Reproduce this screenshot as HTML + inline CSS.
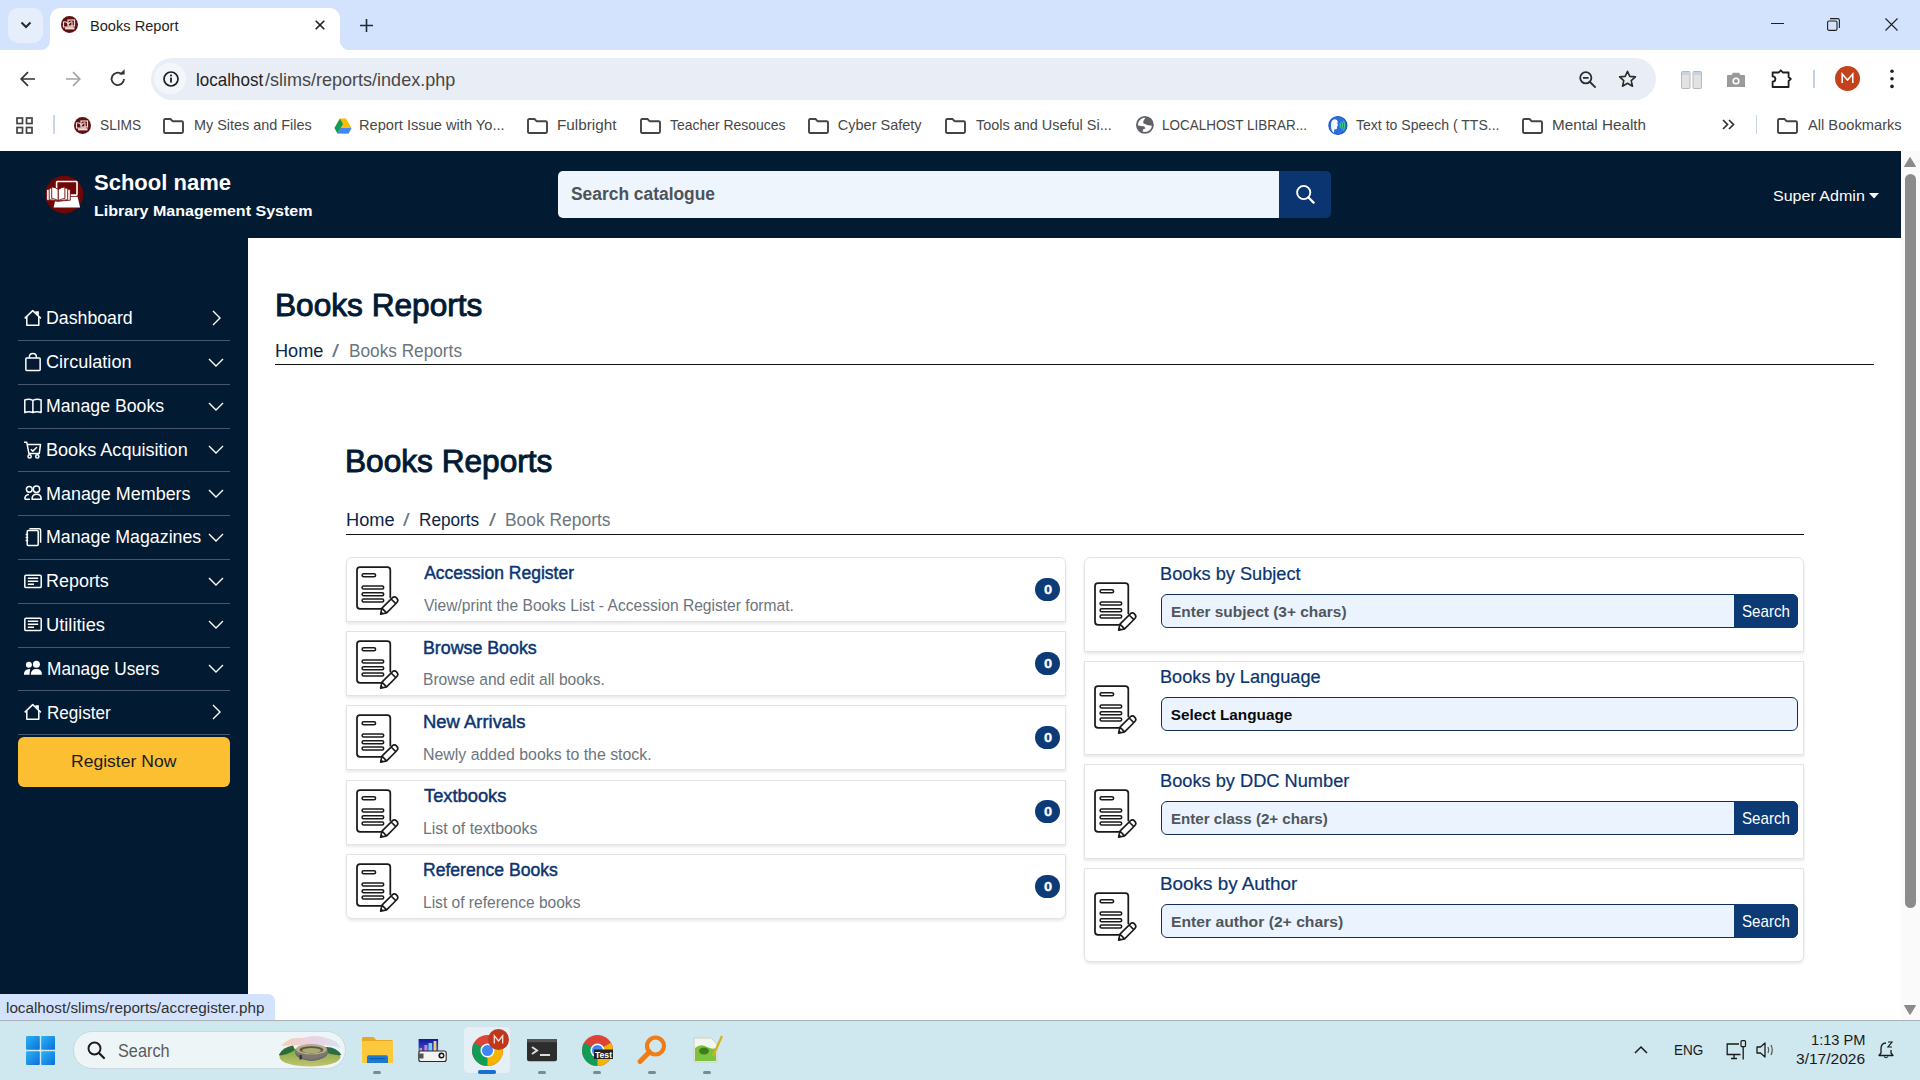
<!DOCTYPE html>
<html><head><meta charset="utf-8"><title>Books Report</title>
<style>
*{box-sizing:border-box}
html,body{margin:0;padding:0}
body{width:1920px;height:1080px;position:relative;overflow:hidden;font-family:"Liberation Sans",sans-serif;background:#fff}
.a{position:absolute}
.t{position:absolute;white-space:pre;line-height:1;transform-origin:0 0}
svg{position:absolute;overflow:visible}
.dv{position:absolute;left:18px;width:212px;height:1px;background:#46576c}
.lc{position:absolute;left:346px;width:720px;height:65px;background:#fff;border:1px solid #e3e3e3;box-shadow:0 2px 3px rgba(0,0,0,.09)}
.rc{position:absolute;left:1084.4px;width:719.4px;height:94.5px;background:#fff;border:1px solid #e3e3e3;box-shadow:0 2px 3px rgba(0,0,0,.09)}
.badge{position:absolute;left:1035px;width:25px;height:23px;border-radius:12px;background:#0c3b78}
.inp{position:absolute;left:1161.25px;width:636.75px;height:34px;border:1.5px solid #122f55;border-radius:6px;background:#ebf4fe}
.sb{position:absolute;left:1734.2px;width:63.8px;height:34px;background:#0b3a75;border-radius:0 6px 6px 0}
</style></head>
<body>
<!-- ================= BROWSER CHROME ================= -->
<div class="a" style="left:0;top:0;width:1920px;height:50px;background:#d3e3fd"></div>
<div class="a" style="left:0;top:50px;width:1920px;height:101px;background:#fff"></div>
<!-- tab search button -->
<div class="a" style="left:8px;top:8px;width:35px;height:35px;border-radius:10px;background:#e6eefc"></div>
<svg style="left:20px;top:21px" width="12" height="8" viewBox="0 0 12 8"><path d="M1.5 1.5 L6 6 L10.5 1.5" fill="none" stroke="#1f2a37" stroke-width="2"/></svg>
<!-- active tab -->
<div class="a" style="left:50px;top:8px;width:290px;height:42px;background:#fff;border-radius:10px 10px 0 0"></div>
<div class="a" style="left:40px;top:40px;width:10px;height:10px;background:radial-gradient(circle at 0 0,transparent 10px,#fff 10.5px)"></div>
<div class="a" style="left:340px;top:40px;width:10px;height:10px;background:radial-gradient(circle at 100% 0,transparent 10px,#fff 10.5px)"></div>
<!-- favicon -->
<svg style="left:61px;top:16px" width="17" height="17" viewBox="0 0 17 17"><circle cx="8.5" cy="8.5" r="8.5" fill="#5c1010"/><rect x="7" y="4" width="6.5" height="6" fill="none" stroke="#f3d9d9" stroke-width="1.2"/><path d="M2.5 6 Q5 5 7.5 8 Q9.5 5 11 6 V11 H2.5Z" fill="none" stroke="#f3d9d9" stroke-width="1.2"/><rect x="4" y="11.2" width="9.5" height="2.2" fill="#f3d9d9"/></svg>
<!-- tab close -->
<svg style="left:315px;top:20px" width="10" height="10" viewBox="0 0 10 10"><path d="M0.7 0.7 L9.3 9.3 M9.3 0.7 L0.7 9.3" stroke="#1f1f1f" stroke-width="1.6"/></svg>
<!-- new tab -->
<svg style="left:359.5px;top:18.5px" width="13" height="13" viewBox="0 0 13 13"><path d="M6.5 0 V13 M0 6.5 H13" stroke="#1f2a37" stroke-width="1.6"/></svg>
<!-- window controls -->
<div class="a" style="left:1771px;top:23px;width:13px;height:1.2px;background:#1f1f1f"></div>
<svg style="left:1827px;top:18px" width="13" height="13" viewBox="0 0 13 13"><rect x="0.6" y="3" width="9.4" height="9.4" rx="1.5" fill="none" stroke="#1f1f1f" stroke-width="1.1"/><path d="M3 0.6 H10.5 Q12.4 0.6 12.4 2.5 V10" fill="none" stroke="#1f1f1f" stroke-width="1.1"/></svg>
<svg style="left:1885px;top:18px" width="13" height="13" viewBox="0 0 13 13"><path d="M0.5 0.5 L12.5 12.5 M12.5 0.5 L0.5 12.5" stroke="#1f1f1f" stroke-width="1.1"/></svg>

<!-- toolbar nav -->
<svg style="left:20px;top:70.5px" width="16" height="16" viewBox="0 0 16 16"><path d="M15 8 H1.5 M8 1.2 L1.2 8 L8 14.8" fill="none" stroke="#333" stroke-width="1.7"/></svg>
<svg style="left:64.5px;top:70.5px" width="16" height="16" viewBox="0 0 16 16"><path d="M1 8 H14.5 M8 1.2 L14.8 8 L8 14.8" fill="none" stroke="#a5a5a5" stroke-width="1.7"/></svg>
<svg style="left:110px;top:70.5px" width="16" height="16" viewBox="0 0 16 16"><path d="M14 8 A6.2 6.2 0 1 1 11.8 3.1" fill="none" stroke="#333" stroke-width="1.8"/><path d="M9 3.6 H14.6 V-1.8 Z" fill="#333"/></svg>
<!-- omnibox -->
<div class="a" style="left:151px;top:58px;width:1505px;height:42px;border-radius:21px;background:#e9eef6"></div>
<div class="a" style="left:154px;top:63px;width:32px;height:31px;border-radius:16px;background:#f3f6fb"></div>
<svg style="left:163px;top:71px" width="16" height="16" viewBox="0 0 16 16"><circle cx="8" cy="8" r="7" fill="none" stroke="#1f1f1f" stroke-width="1.7"/><rect x="7.1" y="6.6" width="1.8" height="5" fill="#1f1f1f"/><circle cx="8" cy="4.5" r="1.05" fill="#1f1f1f"/></svg>
<!-- omnibox right icons -->
<svg style="left:1579px;top:70.5px" width="18" height="18" viewBox="0 0 18 18"><circle cx="6.8" cy="6.8" r="5.6" fill="none" stroke="#2b2b2b" stroke-width="1.8"/><path d="M4 6.8 H9.6 M11 11 L16.6 16.6" stroke="#2b2b2b" stroke-width="1.8"/></svg>
<svg style="left:1618px;top:70px" width="19" height="18" viewBox="0 0 19 18"><path d="M9.5 1.3 L11.8 6.4 L17.4 6.9 L13.2 10.6 L14.5 16.2 L9.5 13.3 L4.5 16.2 L5.8 10.6 L1.6 6.9 L7.2 6.4 Z" fill="none" stroke="#2b2b2b" stroke-width="1.6" stroke-linejoin="round"/></svg>
<svg style="left:1680.5px;top:71px" width="21" height="18" viewBox="0 0 21 18"><rect x="0.5" y="0.5" width="8.5" height="17" rx="1" fill="#e2e2e2" stroke="#b8b8b8"/><rect x="12" y="0.5" width="8.5" height="17" rx="1" fill="#e2e2e2" stroke="#b8b8b8"/><rect x="1" y="1" width="7.5" height="3" fill="#c9d3df"/><rect x="12.5" y="1" width="7.5" height="3" fill="#c9d3df"/></svg>
<svg style="left:1725.5px;top:72px" width="20" height="16" viewBox="0 0 20 16"><path d="M1 4 Q1 3 2 3 H5.5 L7 0.8 H13 L14.5 3 H18 Q19 3 19 4 V15 H1 Z" fill="#9a9a9a"/><circle cx="10" cy="9" r="3.6" fill="#fff"/><circle cx="10" cy="9" r="2" fill="#9a9a9a"/></svg>
<svg style="left:1771px;top:69px" width="22" height="20" viewBox="0 0 22 20"><path d="M1.6 3.5 H7.8 L9.8 1.3 L11.8 3.5 H17.6 V8 L19.8 10 L17.6 12 V18 H1.6 V12.6 Q4.4 12.6 4.4 10 Q4.4 7.4 1.6 7.4 Z" fill="none" stroke="#1f1f1f" stroke-width="1.8" stroke-linejoin="round"/></svg>
<div class="a" style="left:1813px;top:70px;width:1.5px;height:18px;background:#c5d2e6"></div>
<svg style="left:1835px;top:66px" width="25" height="25" viewBox="0 0 25 25"><circle cx="12.5" cy="12.5" r="12.5" fill="#c3411c"/><path d="M7.2 17 V8 L12.5 14 L17.8 8 V17" fill="none" stroke="#fff" stroke-width="1.5"/></svg>
<svg style="left:1890px;top:69px" width="4" height="20" viewBox="0 0 4 20"><circle cx="2" cy="2.2" r="1.8" fill="#1f1f1f"/><circle cx="2" cy="9.8" r="1.8" fill="#1f1f1f"/><circle cx="2" cy="17.4" r="1.8" fill="#1f1f1f"/></svg>

<!-- bookmarks bar icons -->
<svg style="left:16px;top:117px" width="17" height="17" viewBox="0 0 17 17"><g fill="none" stroke="#444" stroke-width="1.7"><rect x="1" y="1" width="5.5" height="5.5"/><rect x="10.5" y="1" width="5.5" height="5.5"/><rect x="1" y="10.5" width="5.5" height="5.5"/><rect x="10.5" y="10.5" width="5.5" height="5.5"/></g></svg>
<div class="a" style="left:53px;top:115px;width:1.5px;height:19px;background:#c9d5e8"></div>
<svg style="left:74px;top:117px" width="17" height="17" viewBox="0 0 17 17"><circle cx="8.5" cy="8.5" r="8.5" fill="#5c1010"/><rect x="7" y="4" width="6.5" height="6" fill="none" stroke="#f3d9d9" stroke-width="1.2"/><path d="M2.5 6 Q5 5 7.5 8 Q9.5 5 11 6 V11 H2.5Z" fill="none" stroke="#f3d9d9" stroke-width="1.2"/><rect x="4" y="11.2" width="9.5" height="2.2" fill="#f3d9d9"/></svg>
<svg style="left:163.3px;top:117.5px" width="21" height="16" viewBox="0 0 21 16"><path d="M1 2.2 Q1 1 2.2 1 H7.5 L9.5 3.2 H18.8 Q20 3.2 20 4.4 V13.8 Q20 15 18.8 15 H2.2 Q1 15 1 13.8 Z" fill="none" stroke="#444" stroke-width="1.9" stroke-linejoin="round"/></svg>
<svg style="left:527px;top:117.5px" width="21" height="16" viewBox="0 0 21 16"><path d="M1 2.2 Q1 1 2.2 1 H7.5 L9.5 3.2 H18.8 Q20 3.2 20 4.4 V13.8 Q20 15 18.8 15 H2.2 Q1 15 1 13.8 Z" fill="none" stroke="#444" stroke-width="1.9" stroke-linejoin="round"/></svg>
<svg style="left:640px;top:117.5px" width="21" height="16" viewBox="0 0 21 16"><path d="M1 2.2 Q1 1 2.2 1 H7.5 L9.5 3.2 H18.8 Q20 3.2 20 4.4 V13.8 Q20 15 18.8 15 H2.2 Q1 15 1 13.8 Z" fill="none" stroke="#444" stroke-width="1.9" stroke-linejoin="round"/></svg>
<svg style="left:808px;top:117.5px" width="21" height="16" viewBox="0 0 21 16"><path d="M1 2.2 Q1 1 2.2 1 H7.5 L9.5 3.2 H18.8 Q20 3.2 20 4.4 V13.8 Q20 15 18.8 15 H2.2 Q1 15 1 13.8 Z" fill="none" stroke="#444" stroke-width="1.9" stroke-linejoin="round"/></svg>
<svg style="left:945px;top:117.5px" width="21" height="16" viewBox="0 0 21 16"><path d="M1 2.2 Q1 1 2.2 1 H7.5 L9.5 3.2 H18.8 Q20 3.2 20 4.4 V13.8 Q20 15 18.8 15 H2.2 Q1 15 1 13.8 Z" fill="none" stroke="#444" stroke-width="1.9" stroke-linejoin="round"/></svg>
<svg style="left:1522px;top:117.5px" width="21" height="16" viewBox="0 0 21 16"><path d="M1 2.2 Q1 1 2.2 1 H7.5 L9.5 3.2 H18.8 Q20 3.2 20 4.4 V13.8 Q20 15 18.8 15 H2.2 Q1 15 1 13.8 Z" fill="none" stroke="#444" stroke-width="1.9" stroke-linejoin="round"/></svg>
<svg style="left:1777px;top:117.5px" width="21" height="16" viewBox="0 0 21 16"><path d="M1 2.2 Q1 1 2.2 1 H7.5 L9.5 3.2 H18.8 Q20 3.2 20 4.4 V13.8 Q20 15 18.8 15 H2.2 Q1 15 1 13.8 Z" fill="none" stroke="#444" stroke-width="1.9" stroke-linejoin="round"/></svg>
<svg style="left:334px;top:117.5px" width="18" height="16" viewBox="0 0 18 16"><path d="M6 0.5 H12 L17.5 10 L14.5 15.5 H3.5 L0.5 10 Z" fill="#fbbc04"/><path d="M6 0.5 L0.5 10 L3.5 15.5 L9 6 Z" fill="#0f9d58"/><path d="M3.5 15.5 H14.5 L17.5 10 H6.5 Z" fill="#4285f4"/></svg>
<svg style="left:1136px;top:116px" width="18" height="18" viewBox="0 0 18 18"><circle cx="8.9" cy="8.9" r="8" fill="#fff" stroke="#5f6368" stroke-width="1.8"/><path d="M9.9 1.2 L7.4 4.7 L7.3 7.2 L11.3 9 L15.5 9.8 L17 8.5 Q16.5 2.5 9.9 1.2 Z" fill="#5f6368"/><path d="M0.9 9.3 L8.4 10.4 L9.4 12.4 L7 13.4 L6.5 16.8 Q1.5 15 0.9 9.3 Z" fill="#5f6368"/></svg>
<svg style="left:1328px;top:115.5px" width="20" height="20" viewBox="0 0 20 20"><circle cx="9.9" cy="9.5" r="9" fill="#2a6fe0" stroke="#1c55c8" stroke-width="1.2"/><path d="M3 9.5 Q3 3 7 3.2 Q9.5 3.5 9.8 6 L9.2 7.5 L10.2 9.3 L9 10.5 Q9.6 13 8 13.3 L6.2 13.6 L6 17 Q3 15 3 9.5 Z" fill="#f4fbff"/><path d="M12 7 Q13 9.5 12 12 M13.8 5.8 Q15.5 9.5 13.8 13.2 M15.5 4.8 Q17.8 9.5 15.5 14.2" fill="none" stroke="#3fd07a" stroke-width="1.1"/></svg>
<svg style="left:1721.5px;top:119px" width="13" height="11" viewBox="0 0 13 11"><path d="M1 1 L5.5 5.5 L1 10 M7 1 L11.5 5.5 L7 10" fill="none" stroke="#333" stroke-width="1.7"/></svg>
<div class="a" style="left:1755.5px;top:115px;width:1.5px;height:19px;background:#c9d5e8"></div>

<!-- ================= PAGE ================= -->
<div class="a" style="left:0;top:151px;width:1901px;height:87px;background:#031a33"></div>
<div class="a" style="left:0;top:238px;width:248px;height:782px;background:#031a33"></div>
<!-- scrollbar -->
<div class="a" style="left:1901px;top:151px;width:19px;height:869px;background:#fafafa"></div>
<svg style="left:1904px;top:157px" width="12" height="10" viewBox="0 0 12 10"><path d="M6 0.5 L11.5 9.5 H0.5 Z" fill="#8a8a8a" stroke="#8a8a8a" stroke-linejoin="round"/></svg>
<div class="a" style="left:1905px;top:174px;width:11px;height:734px;border-radius:5.5px;background:#8b8b8b"></div>
<svg style="left:1904px;top:1005px" width="12" height="10" viewBox="0 0 12 10"><path d="M6 9.5 L11.5 0.5 H0.5 Z" fill="#8a8a8a" stroke="#8a8a8a" stroke-linejoin="round"/></svg>

<!-- navbar logo -->
<svg style="left:42px;top:173px" width="44" height="44" viewBox="0 0 44 44"><circle cx="22.3" cy="21.6" r="18.9" fill="#6f0707"/>
<rect x="14.6" y="8.5" width="20.4" height="13.6" rx="0.8" fill="none" stroke="#fff" stroke-width="1.6"/>
<path d="M11.6 34.6 H38.1 L35.6 23.8 H14 Z" fill="#fff"/>
<g stroke="#6f0707" stroke-width="0.9" fill="#fff" stroke-linejoin="round">
<path d="M4.6 16.6 L7.6 16 L16.3 28.2 L4.6 27.2 Z"/>
<path d="M28.3 16.6 L25.3 16 L16.3 28.2 L28.3 27.2 Z"/>
<path d="M7.2 15.4 L10 14.8 L16.3 27.9 L7.2 26.7 Z"/>
<path d="M25.7 15.4 L22.9 14.8 L16.3 27.9 L25.7 26.7 Z"/>
<path d="M9.7 13.8 Q13.5 14.3 16.3 16.6 V27.6 Q13 25.8 9.7 25.5 Z"/>
<path d="M22.9 13.8 Q19.1 14.3 16.3 16.6 V27.6 Q19.6 25.8 22.9 25.5 Z"/>
</g></svg>
<!-- navbar search -->
<div class="a" style="left:558px;top:170.7px;width:721px;height:47px;background:#eef5fd;border-radius:5px 0 0 5px"></div>
<div class="a" style="left:1279px;top:170.5px;width:51.6px;height:47.5px;background:#0a3570;border-radius:0 5px 5px 0"></div>
<svg style="left:1295.5px;top:185px" width="19" height="19" viewBox="0 0 19 19"><circle cx="7.7" cy="7.5" r="6.6" fill="none" stroke="#fff" stroke-width="1.9"/><path d="M12.5 12.5 L17.6 17.6" stroke="#fff" stroke-width="2.3" stroke-linecap="round"/></svg>
<svg style="left:1869px;top:192.5px" width="10" height="5.5" viewBox="0 0 10 5.5"><path d="M0 0 H10 L5 5.5 Z" fill="#fff"/></svg>

<!-- sidebar dividers -->
<div class="dv" style="top:340px"></div><div class="dv" style="top:383.8px"></div><div class="dv" style="top:427.6px"></div><div class="dv" style="top:471.3px"></div><div class="dv" style="top:515.1px"></div><div class="dv" style="top:558.9px"></div><div class="dv" style="top:602.7px"></div><div class="dv" style="top:646.5px"></div><div class="dv" style="top:690.2px"></div><div class="dv" style="top:734px"></div>
<svg style="left:24px;top:309.00px" width="18" height="18" viewBox="0 0 18 18"><path d="M0.7 9.4 L8.7 1.6 L16.9 9.4" fill="none" stroke="#fff" stroke-width="1.5" stroke-linejoin="round"/><path d="M2.8 8 V16.2 H14.8 V8" fill="none" stroke="#fff" stroke-width="1.5" stroke-linejoin="round"/><path d="M11.4 3.6 V2.2 H14.9 V6.6 Z" fill="#fff"/></svg>
<svg style="left:211.5px;top:310.00px" width="9" height="16" viewBox="0 0 9 16"><path d="M1 1 L8 8 L1 15" fill="none" stroke="#fff" stroke-width="1.4"/></svg>
<svg style="left:24px;top:352.78px" width="18" height="18" viewBox="0 0 18 18"><rect x="1.85" y="5" width="14.3" height="12.4" rx="0.8" fill="none" stroke="#fff" stroke-width="1.5" stroke-linejoin="round"/><path d="M5.4 5 V4 Q5.4 0.5 8.9 0.5 Q12.4 0.5 12.4 4 V5" fill="none" stroke="#fff" stroke-width="1.5" stroke-linejoin="round"/></svg>
<svg style="left:208px;top:357.78px" width="16" height="9" viewBox="0 0 16 9"><path d="M1 1 L8 8 L15 1" fill="none" stroke="#fff" stroke-width="1.4"/></svg>
<svg style="left:24px;top:396.56px" width="18" height="18" viewBox="0 0 18 18"><path d="M0.8 3 Q4.8 1.2 8.9 3.4 Q13 1.2 17.1 3 V15.6 Q13 13.8 8.9 15.6 Q4.8 13.8 0.8 15.6 Z M8.9 3.4 V15.6" fill="none" stroke="#fff" stroke-width="1.5" stroke-linejoin="round"/></svg>
<svg style="left:208px;top:401.56px" width="16" height="9" viewBox="0 0 16 9"><path d="M1 1 L8 8 L15 1" fill="none" stroke="#fff" stroke-width="1.4"/></svg>
<svg style="left:24px;top:440.34px" width="18" height="18" viewBox="0 0 18 18"><path d="M0 2.2 H2.7 L4.9 13.4 H15.3 L16.5 4.4 H3.1" fill="none" stroke="#fff" stroke-width="1.5" stroke-linejoin="round"/><circle cx="5.6" cy="16.4" r="1.6" fill="none" stroke="#fff" stroke-width="1.5" stroke-linejoin="round"/><circle cx="13.3" cy="16.4" r="1.6" fill="none" stroke="#fff" stroke-width="1.5" stroke-linejoin="round"/><path d="M6.8 9.3 L8.8 11.1 L12.9 7.2" fill="none" stroke="#fff" stroke-width="1.5" stroke-linejoin="round"/></svg>
<svg style="left:208px;top:445.34px" width="16" height="9" viewBox="0 0 16 9"><path d="M1 1 L8 8 L15 1" fill="none" stroke="#fff" stroke-width="1.4"/></svg>
<svg style="left:24px;top:484.12px" width="18" height="18" viewBox="0 0 18 18"><circle cx="5.3" cy="5.3" r="2.9" fill="none" stroke="#fff" stroke-width="1.5" stroke-linejoin="round"/><circle cx="12.5" cy="5.3" r="3.2" fill="none" stroke="#fff" stroke-width="1.5" stroke-linejoin="round"/><path d="M0.8 15.3 Q0.8 10.6 5 10.4 M8 15.3 Q8 10.3 12.6 10.3 Q17.2 10.3 17.2 15.3 Z" fill="none" stroke="#fff" stroke-width="1.5" stroke-linejoin="round"/><path d="M0.8 15.3 H6" fill="none" stroke="#fff" stroke-width="1.5" stroke-linejoin="round"/></svg>
<svg style="left:208px;top:489.12px" width="16" height="9" viewBox="0 0 16 9"><path d="M1 1 L8 8 L15 1" fill="none" stroke="#fff" stroke-width="1.4"/></svg>
<svg style="left:24px;top:527.90px" width="18" height="18" viewBox="0 0 18 18"><rect x="3.2" y="2.4" width="11" height="15" rx="1" fill="none" stroke="#fff" stroke-width="1.5" stroke-linejoin="round"/><path d="M5.4 0.8 H15.3 Q16.6 0.8 16.6 2.1 V14.8" fill="none" stroke="#fff" stroke-width="1.5" stroke-linejoin="round"/><path d="M1.6 6.5 H4.2 M1.6 9.5 H4.2 M1.6 12.5 H4.2" stroke="#fff" stroke-width="1.3"/></svg>
<svg style="left:208px;top:532.90px" width="16" height="9" viewBox="0 0 16 9"><path d="M1 1 L8 8 L15 1" fill="none" stroke="#fff" stroke-width="1.4"/></svg>
<svg style="left:24px;top:571.68px" width="18" height="18" viewBox="0 0 18 18"><rect x="0.8" y="3.2" width="16.4" height="12.4" rx="1.2" fill="none" stroke="#fff" stroke-width="1.5" stroke-linejoin="round"/><path d="M3.8 6.3 H14.2 M3.8 9.3 H14.2 M3.8 12.3 H10" stroke="#fff" stroke-width="1.5"/></svg>
<svg style="left:208px;top:576.68px" width="16" height="9" viewBox="0 0 16 9"><path d="M1 1 L8 8 L15 1" fill="none" stroke="#fff" stroke-width="1.4"/></svg>
<svg style="left:24px;top:615.46px" width="18" height="18" viewBox="0 0 18 18"><rect x="0.8" y="3.2" width="16.4" height="12.4" rx="1.2" fill="none" stroke="#fff" stroke-width="1.5" stroke-linejoin="round"/><path d="M3.8 6.3 H14.2 M3.8 9.3 H14.2 M3.8 12.3 H10" stroke="#fff" stroke-width="1.5"/></svg>
<svg style="left:208px;top:620.46px" width="16" height="9" viewBox="0 0 16 9"><path d="M1 1 L8 8 L15 1" fill="none" stroke="#fff" stroke-width="1.4"/></svg>
<svg style="left:24px;top:659.24px" width="18" height="18" viewBox="0 0 18 18"><circle cx="4.9" cy="5.8" r="3" fill="#fff"/><circle cx="12.4" cy="5.3" r="3.5" fill="#fff"/><path d="M6.8 15.8 Q6.8 10 12.4 10 Q18 10 18 15.8 Z" fill="#fff"/><path d="M-0.1 15.8 Q-0.1 10.1 5.4 10 L6.1 10.2 Q5.6 12.8 5.6 15.8 Z" fill="#fff"/></svg>
<svg style="left:208px;top:664.24px" width="16" height="9" viewBox="0 0 16 9"><path d="M1 1 L8 8 L15 1" fill="none" stroke="#fff" stroke-width="1.4"/></svg>
<svg style="left:24px;top:703.02px" width="18" height="18" viewBox="0 0 18 18"><path d="M0.7 9.4 L8.7 1.6 L16.9 9.4" fill="none" stroke="#fff" stroke-width="1.5" stroke-linejoin="round"/><path d="M2.8 8 V16.2 H14.8 V8" fill="none" stroke="#fff" stroke-width="1.5" stroke-linejoin="round"/><path d="M11.4 3.6 V2.2 H14.9 V6.6 Z" fill="#fff"/></svg>
<svg style="left:211.5px;top:704.02px" width="9" height="16" viewBox="0 0 9 16"><path d="M1 1 L8 8 L1 15" fill="none" stroke="#fff" stroke-width="1.4"/></svg>
<div class="a" style="left:18px;top:737px;width:212px;height:50px;border-radius:6px;background:#fbbf31"></div>

<!-- content lines -->
<div class="a" style="left:275px;top:364px;width:1599px;height:1.3px;background:#111"></div>
<div class="a" style="left:346px;top:534px;width:1458px;height:1.3px;background:#111"></div>

<div class="lc" style="top:557.00px;border-radius:6px 6px 0 0"></div>
<svg style="left:356px;top:566.00px" width="44" height="50" viewBox="0 0 44 50"><g fill="none" stroke="#1a1a1a" stroke-width="1.75" stroke-linejoin="round" stroke-linecap="round"><path d="M25 42.8 H4 Q1 42.8 1 39.8 V4 Q1 1 4 1 H31.3 Q34.3 1 34.3 4 V31.5"/></g><g fill="none" stroke="#1a1a1a" stroke-width="1.55"><rect x="6.1" y="7.7" width="13.5" height="3.1" rx="1.55"/><rect x="6.1" y="19.9" width="21.6" height="3.0" rx="1.5"/><rect x="6.1" y="26.8" width="21.6" height="3.0" rx="1.5"/><rect x="6.1" y="33.0" width="21.6" height="3.0" rx="1.5"/><g transform="translate(24.6,48.2) rotate(-45)" stroke-width="1.6" stroke-linejoin="round"><path d="M0 0 L5.2 -3.3 H19.5 Q22.8 -3.3 22.8 0 Q22.8 3.3 19.5 3.3 H5.2 Z M5.2 -3.3 V3.3 M18.2 -3.3 V3.3"/></g></g><g transform="translate(24.6,48.2) rotate(-45)"><path d="M-0.5 0 L2.6 -1.8 V1.8 Z" fill="#1a1a1a"/></g></svg>
<div class="badge" style="top:577.70px"></div>
<div class="lc" style="top:631.20px;border-radius:0"></div>
<svg style="left:356px;top:640.20px" width="44" height="50" viewBox="0 0 44 50"><g fill="none" stroke="#1a1a1a" stroke-width="1.75" stroke-linejoin="round" stroke-linecap="round"><path d="M25 42.8 H4 Q1 42.8 1 39.8 V4 Q1 1 4 1 H31.3 Q34.3 1 34.3 4 V31.5"/></g><g fill="none" stroke="#1a1a1a" stroke-width="1.55"><rect x="6.1" y="7.7" width="13.5" height="3.1" rx="1.55"/><rect x="6.1" y="19.9" width="21.6" height="3.0" rx="1.5"/><rect x="6.1" y="26.8" width="21.6" height="3.0" rx="1.5"/><rect x="6.1" y="33.0" width="21.6" height="3.0" rx="1.5"/><g transform="translate(24.6,48.2) rotate(-45)" stroke-width="1.6" stroke-linejoin="round"><path d="M0 0 L5.2 -3.3 H19.5 Q22.8 -3.3 22.8 0 Q22.8 3.3 19.5 3.3 H5.2 Z M5.2 -3.3 V3.3 M18.2 -3.3 V3.3"/></g></g><g transform="translate(24.6,48.2) rotate(-45)"><path d="M-0.5 0 L2.6 -1.8 V1.8 Z" fill="#1a1a1a"/></g></svg>
<div class="badge" style="top:651.90px"></div>
<div class="lc" style="top:705.40px;border-radius:0"></div>
<svg style="left:356px;top:714.40px" width="44" height="50" viewBox="0 0 44 50"><g fill="none" stroke="#1a1a1a" stroke-width="1.75" stroke-linejoin="round" stroke-linecap="round"><path d="M25 42.8 H4 Q1 42.8 1 39.8 V4 Q1 1 4 1 H31.3 Q34.3 1 34.3 4 V31.5"/></g><g fill="none" stroke="#1a1a1a" stroke-width="1.55"><rect x="6.1" y="7.7" width="13.5" height="3.1" rx="1.55"/><rect x="6.1" y="19.9" width="21.6" height="3.0" rx="1.5"/><rect x="6.1" y="26.8" width="21.6" height="3.0" rx="1.5"/><rect x="6.1" y="33.0" width="21.6" height="3.0" rx="1.5"/><g transform="translate(24.6,48.2) rotate(-45)" stroke-width="1.6" stroke-linejoin="round"><path d="M0 0 L5.2 -3.3 H19.5 Q22.8 -3.3 22.8 0 Q22.8 3.3 19.5 3.3 H5.2 Z M5.2 -3.3 V3.3 M18.2 -3.3 V3.3"/></g></g><g transform="translate(24.6,48.2) rotate(-45)"><path d="M-0.5 0 L2.6 -1.8 V1.8 Z" fill="#1a1a1a"/></g></svg>
<div class="badge" style="top:726.10px"></div>
<div class="lc" style="top:779.60px;border-radius:0"></div>
<svg style="left:356px;top:788.60px" width="44" height="50" viewBox="0 0 44 50"><g fill="none" stroke="#1a1a1a" stroke-width="1.75" stroke-linejoin="round" stroke-linecap="round"><path d="M25 42.8 H4 Q1 42.8 1 39.8 V4 Q1 1 4 1 H31.3 Q34.3 1 34.3 4 V31.5"/></g><g fill="none" stroke="#1a1a1a" stroke-width="1.55"><rect x="6.1" y="7.7" width="13.5" height="3.1" rx="1.55"/><rect x="6.1" y="19.9" width="21.6" height="3.0" rx="1.5"/><rect x="6.1" y="26.8" width="21.6" height="3.0" rx="1.5"/><rect x="6.1" y="33.0" width="21.6" height="3.0" rx="1.5"/><g transform="translate(24.6,48.2) rotate(-45)" stroke-width="1.6" stroke-linejoin="round"><path d="M0 0 L5.2 -3.3 H19.5 Q22.8 -3.3 22.8 0 Q22.8 3.3 19.5 3.3 H5.2 Z M5.2 -3.3 V3.3 M18.2 -3.3 V3.3"/></g></g><g transform="translate(24.6,48.2) rotate(-45)"><path d="M-0.5 0 L2.6 -1.8 V1.8 Z" fill="#1a1a1a"/></g></svg>
<div class="badge" style="top:800.30px"></div>
<div class="lc" style="top:853.80px;border-radius:0 0 6px 6px"></div>
<svg style="left:356px;top:862.80px" width="44" height="50" viewBox="0 0 44 50"><g fill="none" stroke="#1a1a1a" stroke-width="1.75" stroke-linejoin="round" stroke-linecap="round"><path d="M25 42.8 H4 Q1 42.8 1 39.8 V4 Q1 1 4 1 H31.3 Q34.3 1 34.3 4 V31.5"/></g><g fill="none" stroke="#1a1a1a" stroke-width="1.55"><rect x="6.1" y="7.7" width="13.5" height="3.1" rx="1.55"/><rect x="6.1" y="19.9" width="21.6" height="3.0" rx="1.5"/><rect x="6.1" y="26.8" width="21.6" height="3.0" rx="1.5"/><rect x="6.1" y="33.0" width="21.6" height="3.0" rx="1.5"/><g transform="translate(24.6,48.2) rotate(-45)" stroke-width="1.6" stroke-linejoin="round"><path d="M0 0 L5.2 -3.3 H19.5 Q22.8 -3.3 22.8 0 Q22.8 3.3 19.5 3.3 H5.2 Z M5.2 -3.3 V3.3 M18.2 -3.3 V3.3"/></g></g><g transform="translate(24.6,48.2) rotate(-45)"><path d="M-0.5 0 L2.6 -1.8 V1.8 Z" fill="#1a1a1a"/></g></svg>
<div class="badge" style="top:874.50px"></div>
<div class="rc" style="top:557.40px;border-radius:6px 6px 0 0"></div>
<svg style="left:1094.4px;top:581.70px" width="44" height="50" viewBox="0 0 44 50"><g fill="none" stroke="#1a1a1a" stroke-width="1.75" stroke-linejoin="round" stroke-linecap="round"><path d="M25 42.8 H4 Q1 42.8 1 39.8 V4 Q1 1 4 1 H31.3 Q34.3 1 34.3 4 V31.5"/></g><g fill="none" stroke="#1a1a1a" stroke-width="1.55"><rect x="6.1" y="7.7" width="13.5" height="3.1" rx="1.55"/><rect x="6.1" y="19.9" width="21.6" height="3.0" rx="1.5"/><rect x="6.1" y="26.8" width="21.6" height="3.0" rx="1.5"/><rect x="6.1" y="33.0" width="21.6" height="3.0" rx="1.5"/><g transform="translate(24.6,48.2) rotate(-45)" stroke-width="1.6" stroke-linejoin="round"><path d="M0 0 L5.2 -3.3 H19.5 Q22.8 -3.3 22.8 0 Q22.8 3.3 19.5 3.3 H5.2 Z M5.2 -3.3 V3.3 M18.2 -3.3 V3.3"/></g></g><g transform="translate(24.6,48.2) rotate(-45)"><path d="M-0.5 0 L2.6 -1.8 V1.8 Z" fill="#1a1a1a"/></g></svg>
<div class="inp" style="top:593.70px"></div>
<div class="sb" style="top:593.70px"></div>
<div class="rc" style="top:660.90px;border-radius:0"></div>
<svg style="left:1094.4px;top:685.20px" width="44" height="50" viewBox="0 0 44 50"><g fill="none" stroke="#1a1a1a" stroke-width="1.75" stroke-linejoin="round" stroke-linecap="round"><path d="M25 42.8 H4 Q1 42.8 1 39.8 V4 Q1 1 4 1 H31.3 Q34.3 1 34.3 4 V31.5"/></g><g fill="none" stroke="#1a1a1a" stroke-width="1.55"><rect x="6.1" y="7.7" width="13.5" height="3.1" rx="1.55"/><rect x="6.1" y="19.9" width="21.6" height="3.0" rx="1.5"/><rect x="6.1" y="26.8" width="21.6" height="3.0" rx="1.5"/><rect x="6.1" y="33.0" width="21.6" height="3.0" rx="1.5"/><g transform="translate(24.6,48.2) rotate(-45)" stroke-width="1.6" stroke-linejoin="round"><path d="M0 0 L5.2 -3.3 H19.5 Q22.8 -3.3 22.8 0 Q22.8 3.3 19.5 3.3 H5.2 Z M5.2 -3.3 V3.3 M18.2 -3.3 V3.3"/></g></g><g transform="translate(24.6,48.2) rotate(-45)"><path d="M-0.5 0 L2.6 -1.8 V1.8 Z" fill="#1a1a1a"/></g></svg>
<div class="inp" style="top:697.20px"></div>
<div class="rc" style="top:764.40px;border-radius:0"></div>
<svg style="left:1094.4px;top:788.70px" width="44" height="50" viewBox="0 0 44 50"><g fill="none" stroke="#1a1a1a" stroke-width="1.75" stroke-linejoin="round" stroke-linecap="round"><path d="M25 42.8 H4 Q1 42.8 1 39.8 V4 Q1 1 4 1 H31.3 Q34.3 1 34.3 4 V31.5"/></g><g fill="none" stroke="#1a1a1a" stroke-width="1.55"><rect x="6.1" y="7.7" width="13.5" height="3.1" rx="1.55"/><rect x="6.1" y="19.9" width="21.6" height="3.0" rx="1.5"/><rect x="6.1" y="26.8" width="21.6" height="3.0" rx="1.5"/><rect x="6.1" y="33.0" width="21.6" height="3.0" rx="1.5"/><g transform="translate(24.6,48.2) rotate(-45)" stroke-width="1.6" stroke-linejoin="round"><path d="M0 0 L5.2 -3.3 H19.5 Q22.8 -3.3 22.8 0 Q22.8 3.3 19.5 3.3 H5.2 Z M5.2 -3.3 V3.3 M18.2 -3.3 V3.3"/></g></g><g transform="translate(24.6,48.2) rotate(-45)"><path d="M-0.5 0 L2.6 -1.8 V1.8 Z" fill="#1a1a1a"/></g></svg>
<div class="inp" style="top:800.70px"></div>
<div class="sb" style="top:800.70px"></div>
<div class="rc" style="top:867.90px;border-radius:0 0 6px 6px"></div>
<svg style="left:1094.4px;top:892.20px" width="44" height="50" viewBox="0 0 44 50"><g fill="none" stroke="#1a1a1a" stroke-width="1.75" stroke-linejoin="round" stroke-linecap="round"><path d="M25 42.8 H4 Q1 42.8 1 39.8 V4 Q1 1 4 1 H31.3 Q34.3 1 34.3 4 V31.5"/></g><g fill="none" stroke="#1a1a1a" stroke-width="1.55"><rect x="6.1" y="7.7" width="13.5" height="3.1" rx="1.55"/><rect x="6.1" y="19.9" width="21.6" height="3.0" rx="1.5"/><rect x="6.1" y="26.8" width="21.6" height="3.0" rx="1.5"/><rect x="6.1" y="33.0" width="21.6" height="3.0" rx="1.5"/><g transform="translate(24.6,48.2) rotate(-45)" stroke-width="1.6" stroke-linejoin="round"><path d="M0 0 L5.2 -3.3 H19.5 Q22.8 -3.3 22.8 0 Q22.8 3.3 19.5 3.3 H5.2 Z M5.2 -3.3 V3.3 M18.2 -3.3 V3.3"/></g></g><g transform="translate(24.6,48.2) rotate(-45)"><path d="M-0.5 0 L2.6 -1.8 V1.8 Z" fill="#1a1a1a"/></g></svg>
<div class="inp" style="top:904.20px"></div>
<div class="sb" style="top:904.20px"></div>

<!-- status bubble -->
<div class="a" style="left:0;top:994px;width:274.5px;height:26px;background:#d3e3fd;border-radius:0 7px 0 0"></div>

<!-- ================= TASKBAR ================= -->
<div class="a" style="left:0;top:1020px;width:1920px;height:60px;background:#cfe7ee;border-top:1px solid #a9b2b5"></div>

<svg style="left:26px;top:1036px" width="29" height="29" viewBox="0 0 29 29"><defs><linearGradient id="wg" x1="0" y1="0" x2="1" y2="1"><stop offset="0" stop-color="#2bb3f5"/><stop offset="1" stop-color="#0a6fd8"/></linearGradient></defs><rect x="0" y="0" width="13.8" height="13.8" rx="1" fill="url(#wg)"/><rect x="15.2" y="0" width="13.8" height="13.8" rx="1" fill="url(#wg)"/><rect x="0" y="15.2" width="13.8" height="13.8" rx="1" fill="url(#wg)"/><rect x="15.2" y="15.2" width="13.8" height="13.8" rx="1" fill="url(#wg)"/></svg>
<div class="a" style="left:72.75px;top:1031px;width:273.25px;height:38.4px;border-radius:19.2px;background:#eef5f7;border:1px solid #c9d9df"></div>
<svg style="left:87px;top:1041px" width="18" height="18" viewBox="0 0 18 18"><circle cx="7.5" cy="7.5" r="6" fill="none" stroke="#1a1a1a" stroke-width="1.9"/><path d="M12 12 L17 17" stroke="#1a1a1a" stroke-width="2.2" stroke-linecap="round"/></svg>
<svg style="left:275px;top:1030px" width="70" height="40" viewBox="0 0 70 40"><defs><linearGradient id="sky" x1="0" y1="0" x2="1" y2="0"><stop offset="0" stop-color="#f6c7a8"/><stop offset="0.5" stop-color="#ecc8e0"/><stop offset="1" stop-color="#cfe0ee"/></linearGradient><linearGradient id="grass" x1="0" y1="0" x2="0" y2="1"><stop offset="0" stop-color="#7aa53f"/><stop offset="1" stop-color="#c4c46e"/></linearGradient></defs>
<path d="M6 16 Q14 6 28 8 Q40 4 52 8 Q62 10 66 18 Q50 14 36 15 Q20 15 6 16 Z" fill="url(#sky)" opacity=".8"/>
<ellipse cx="35" cy="27" rx="30.5" ry="9.5" fill="url(#grass)"/>
<path d="M4 24.5 Q8 17 18 15.5 L20 20 Q12 25 4 25.5 Z" fill="#2f6b3a"/>
<path d="M49 17 Q61 16 66.5 25 Q58 26 50 22 Z" fill="#2e6a44"/>
<ellipse cx="36.5" cy="22.5" rx="16.5" ry="8" fill="#7f7868"/>
<ellipse cx="36.5" cy="19.3" rx="15.5" ry="5.2" fill="#b8ae8c"/>
<ellipse cx="36.5" cy="19.8" rx="12" ry="3.6" fill="#5e5648"/>
<ellipse cx="36.5" cy="20.6" rx="9.5" ry="2.6" fill="#a9ab6e"/>
<path d="M20 21.5 Q22 28 36.5 29.8 Q51 28 53 21.5 Q52 29 36.5 31 Q21 29 20 21.5 Z" fill="#5c6a86"/>
<rect x="24.5" y="25" width="2.4" height="4.5" fill="#3e332d"/>
</svg>
<svg style="left:362px;top:1036px" width="31" height="28" viewBox="0 0 31 28"><path d="M0 2.5 Q0 1 1.5 1 H10.5 Q12 1 13 2.5 L14 4 H29.5 Q31 4 31 5.5 V8 H0 Z" fill="#e6a823"/><rect x="0" y="5" width="31" height="22" rx="1.2" fill="#fcc93c"/><path d="M5 21 Q5 19.2 6.8 19.2 H24.2 Q26 19.2 26 21 V27 H5 Z" fill="#1b7bd0"/><rect x="7.5" y="22" width="16" height="1.2" fill="#0f5aa8"/></svg>
<div class="a" style="left:372.5px;top:1070.5px;width:8px;height:3px;border-radius:1.5px;background:#7a8a92"></div>
<svg style="left:417.7px;top:1038.8px" width="29" height="24" viewBox="0 0 29 24"><defs><linearGradient id="cg" x1="0" y1="0" x2="0" y2="1"><stop offset="0" stop-color="#10199e"/><stop offset="1" stop-color="#4b52c9"/></linearGradient></defs><rect x="0.6" y="0" width="19.5" height="13" fill="url(#cg)"/><rect x="1.6" y="9" width="2.4" height="4" fill="#c8a07a"/><rect x="6.4" y="6" width="3" height="7" fill="#c77ee8"/><rect x="10.5" y="4" width="3.6" height="9" fill="#6fd0f5"/><rect x="15.6" y="2" width="2.8" height="11" fill="#ead36a"/><rect x="0.8" y="12" width="27.4" height="10.5" rx="2" fill="#f4f4f4" stroke="#2a2a2a" stroke-width="1.1"/><rect x="1" y="14.5" width="4.5" height="5" fill="#555"/><circle cx="23.4" cy="16.6" r="3" fill="#111"/><circle cx="23.6" cy="16.6" r="1.5" fill="#eee"/></svg>
<div class="a" style="left:463.3px;top:1026.3px;width:47.5px;height:47.7px;border-radius:5px;background:#e4f0f5;border:1px solid #d5e3ea"></div>
<svg style="left:471.8px;top:1034.8px" width="31" height="31" viewBox="0 0 31 31"><circle cx="15.5" cy="15.5" r="15.5" fill="#db4437"/><path d="M15.5 15.5 L2.1 7.75 A15.5 15.5 0 0 0 15.5 31 Z" fill="#0f9d58"/><path d="M15.5 15.5 L15.5 31 A15.5 15.5 0 0 0 28.9 7.75 Z" fill="#f4b400"/><circle cx="15.5" cy="15.5" r="7" fill="#fff"/><circle cx="15.5" cy="15.5" r="5.5" fill="#4285f4"/></svg>
<svg style="left:487.6px;top:1028.9px" width="21" height="21" viewBox="0 0 21 21"><circle cx="10.5" cy="10.5" r="10.5" fill="#c0381c"/><path d="M6.3 14.5 V6.8 L10.5 12 L14.7 6.8 V14.5" fill="none" stroke="#fbe3dc" stroke-width="1.3"/></svg>
<div class="a" style="left:477.7px;top:1070.4px;width:18.8px;height:3.4px;border-radius:1.7px;background:#1a6fd1"></div>
<svg style="left:527.2px;top:1038.8px" width="30" height="22.2" viewBox="0 0 30 22.2"><rect x="0" y="0" width="30" height="22.2" rx="2" fill="#2d2d2d"/><rect x="0" y="0" width="30" height="3.2" fill="#555"/><path d="M5 8 L10 11.5 L5 15" fill="none" stroke="#ddd" stroke-width="2"/><rect x="13" y="15" width="10" height="2" fill="#ddd"/></svg>
<div class="a" style="left:537.7px;top:1070.5px;width:8px;height:3px;border-radius:1.5px;background:#7a8a92"></div>
<svg style="left:582px;top:1034.8px" width="31" height="31" viewBox="0 0 31 31"><circle cx="15.5" cy="15.5" r="15.5" fill="#db4437"/><path d="M15.5 15.5 L2.1 7.75 A15.5 15.5 0 0 0 15.5 31 Z" fill="#0f9d58"/><path d="M15.5 15.5 L15.5 31 A15.5 15.5 0 0 0 28.9 7.75 Z" fill="#f4b400"/><circle cx="15.5" cy="15.5" r="7" fill="#fff"/><circle cx="15.5" cy="15.5" r="5.5" fill="#4285f4"/><rect x="12" y="14.5" width="19" height="9.5" fill="#222"/><text x="13" y="22.8" font-family="Liberation Sans" font-weight="bold" font-size="8.6" fill="#fff" textLength="17">Test</text></svg>
<div class="a" style="left:593px;top:1070.5px;width:8px;height:3px;border-radius:1.5px;background:#7a8a92"></div>
<svg style="left:637px;top:1034.8px" width="30" height="29" viewBox="0 0 30 29"><circle cx="18.5" cy="11" r="8.5" fill="none" stroke="#f07c16" stroke-width="4.2"/><path d="M12.5 17 L3 26.5" stroke="#f07c16" stroke-width="5" stroke-linecap="round"/></svg>
<div class="a" style="left:648px;top:1070.5px;width:8px;height:3px;border-radius:1.5px;background:#7a8a92"></div>
<svg style="left:692.6px;top:1034px" width="30" height="29" viewBox="0 0 30 29"><path d="M1 4 H18 L24 10 V28 H1 Z" fill="#f4f7ef" stroke="#c9d2c0"/><path d="M2 14 Q8 9 14 13 Q20 16 23 14 V27 H2 Z" fill="#7cc23f"/><ellipse cx="11" cy="17" rx="5" ry="3.5" fill="#3e7d1b"/><path d="M20 22 L29 2" stroke="#d7b020" stroke-width="2.2"/></svg>
<div class="a" style="left:703.4px;top:1070.5px;width:8px;height:3px;border-radius:1.5px;background:#7a8a92"></div>
<svg style="left:1634px;top:1046.3px" width="14" height="8" viewBox="0 0 14 8"><path d="M1 7 L7 1 L13 7" fill="none" stroke="#1a1a1a" stroke-width="1.5"/></svg>
<svg style="left:1725.8px;top:1040px" width="21" height="20" viewBox="0 0 21 20"><path d="M13 4 H1.2 V14.5 H14.5" fill="none" stroke="#1a1a1a" stroke-width="1.3"/><path d="M5 18.5 H11 M8 14.5 V18.5" stroke="#1a1a1a" stroke-width="1.3"/><rect x="15" y="0.7" width="4.5" height="6" rx="1" fill="none" stroke="#1a1a1a" stroke-width="1.2"/><path d="M17.2 6.7 V19.5" stroke="#1a1a1a" stroke-width="1.3"/></svg>
<svg style="left:1755.8px;top:1041.7px" width="20" height="16" viewBox="0 0 20 16"><path d="M1 5 H4.5 L9 1 V15 L4.5 11 H1 Z" fill="none" stroke="#1a1a1a" stroke-width="1.3" stroke-linejoin="round"/><path d="M12 5 Q13.5 8 12 11 M15 3 Q17.5 8 15 13" fill="none" stroke="#555" stroke-width="1.2"/></svg>
<svg style="left:1877.5px;top:1041.3px" width="17" height="18" viewBox="0 0 17 18"><path d="M8 2 Q3 2 3 8 V12 L1 14.5 H15 L13 12 V9" fill="none" stroke="#1a1a1a" stroke-width="1.3" stroke-linejoin="round"/><path d="M6 15.5 Q8 18 10 15.5" fill="none" stroke="#1a1a1a" stroke-width="1.2"/><path d="M10 1 H14 L10 6 H14" fill="none" stroke="#1a1a1a" stroke-width="1.2"/></svg>


<span class="t" style="left:89.73px;top:18.10px;font-size:15px;font-weight:400;color:#1f1f1f;transform:scaleX(0.9733);">Books Report</span>
<span class="t" style="left:196.40px;top:69.92px;font-size:19px;font-weight:400;color:#1f1f1f;transform:scaleX(0.8959);">localhost</span>
<span class="t" style="left:265.10px;top:69.92px;font-size:19px;font-weight:400;color:#474747;transform:scaleX(0.9480);">/slims/reports/index.php</span>
<span class="t" style="left:99.55px;top:117.53px;font-size:14.5px;font-weight:400;color:#474747;transform:scaleX(0.9476);">SLIMS</span>
<span class="t" style="left:193.81px;top:117.53px;font-size:14.5px;font-weight:400;color:#474747;transform:scaleX(0.9932);">My Sites and Files</span>
<span class="t" style="left:359.49px;top:117.53px;font-size:14.5px;font-weight:400;color:#474747;transform:scaleX(1.0092);">Report Issue with Yo...</span>
<span class="t" style="left:556.95px;top:117.53px;font-size:14.5px;font-weight:400;color:#474747;transform:scaleX(1.0536);">Fulbright</span>
<span class="t" style="left:670.00px;top:117.53px;font-size:14.5px;font-weight:400;color:#474747;transform:scaleX(0.9625);">Teacher Resouces</span>
<span class="t" style="left:837.80px;top:117.53px;font-size:14.5px;font-weight:400;color:#474747;">Cyber Safety</span>
<span class="t" style="left:975.50px;top:117.53px;font-size:14.5px;font-weight:400;color:#474747;transform:scaleX(0.9963);">Tools and Useful Si...</span>
<span class="t" style="left:1162.07px;top:117.53px;font-size:14.5px;font-weight:400;color:#474747;transform:scaleX(0.9286);">LOCALHOST LIBRAR...</span>
<span class="t" style="left:1355.50px;top:117.53px;font-size:14.5px;font-weight:400;color:#474747;transform:scaleX(0.9694);">Text to Speech ( TTS...</span>
<span class="t" style="left:1551.95px;top:117.53px;font-size:14.5px;font-weight:400;color:#474747;transform:scaleX(1.0511);">Mental Health</span>
<span class="t" style="left:1808.30px;top:117.53px;font-size:14.5px;font-weight:400;color:#474747;transform:scaleX(1.0109);">All Bookmarks</span>
<span class="t" style="left:94.02px;top:171.55px;font-size:22.5px;font-weight:700;color:#ffffff;transform:scaleX(0.9783);">School name</span>
<span class="t" style="left:93.89px;top:204.23px;font-size:14.5px;font-weight:700;color:#ffffff;transform:scaleX(1.1071);">Library Management System</span>
<span class="t" style="left:571.03px;top:185.36px;font-size:18px;font-weight:700;color:#4d535a;transform:scaleX(0.9662);">Search catalogue</span>
<span class="t" style="left:1773.17px;top:187.88px;font-size:15.5px;font-weight:400;color:#ffffff;transform:scaleX(1.0345);">Super Admin</span>
<span class="t" style="left:46.49px;top:310.49px;font-size:17.5px;font-weight:400;color:#ffffff;transform:scaleX(1.0131);">Dashboard</span>
<span class="t" style="left:46.47px;top:354.27px;font-size:17.5px;font-weight:400;color:#ffffff;transform:scaleX(1.0346);">Circulation</span>
<span class="t" style="left:46.49px;top:398.05px;font-size:17.5px;font-weight:400;color:#ffffff;transform:scaleX(1.0122);">Manage Books</span>
<span class="t" style="left:46.47px;top:441.83px;font-size:17.5px;font-weight:400;color:#ffffff;transform:scaleX(1.0333);">Books Acquisition</span>
<span class="t" style="left:46.48px;top:485.61px;font-size:17.5px;font-weight:400;color:#ffffff;transform:scaleX(1.0250);">Manage Members</span>
<span class="t" style="left:46.48px;top:529.39px;font-size:17.5px;font-weight:400;color:#ffffff;transform:scaleX(1.0166);">Manage Magazines</span>
<span class="t" style="left:46.48px;top:573.17px;font-size:17.5px;font-weight:400;color:#ffffff;transform:scaleX(1.0250);">Reports</span>
<span class="t" style="left:46.45px;top:616.95px;font-size:17.5px;font-weight:400;color:#ffffff;transform:scaleX(1.0455);">Utilities</span>
<span class="t" style="left:46.51px;top:660.73px;font-size:17.5px;font-weight:400;color:#ffffff;transform:scaleX(0.9866);">Manage Users</span>
<span class="t" style="left:46.52px;top:704.51px;font-size:17.5px;font-weight:400;color:#ffffff;transform:scaleX(0.9766);">Register</span>
<span class="t" style="left:71.24px;top:753.75px;font-size:16.6px;font-weight:400;color:#1c1c1c;transform:scaleX(1.0576);">Register Now</span>
<span class="t" style="left:274.96px;top:290.46px;font-size:31px;font-weight:400;color:#031a33;transform:scaleX(1.0200);-webkit-text-stroke:0.95px currentColor;">Books Reports</span>
<span class="t" style="left:275.49px;top:341.66px;font-size:18px;font-weight:400;color:#0b2545;transform:scaleX(1.0087);">Home</span>
<span class="t" style="left:332.30px;top:341.66px;font-size:18px;font-weight:400;color:#6c757d;transform:scaleX(1.4000);">/</span>
<span class="t" style="left:348.74px;top:341.66px;font-size:18px;font-weight:400;color:#6c757d;transform:scaleX(0.9573);">Books Reports</span>
<span class="t" style="left:345.46px;top:446.26px;font-size:31px;font-weight:400;color:#031a33;transform:scaleX(1.0200);-webkit-text-stroke:0.95px currentColor;">Books Reports</span>
<span class="t" style="left:345.59px;top:511.36px;font-size:18px;font-weight:400;color:#0b2545;transform:scaleX(1.0130);">Home</span>
<span class="t" style="left:403.40px;top:511.36px;font-size:18px;font-weight:400;color:#6c757d;transform:scaleX(1.3200);">/</span>
<span class="t" style="left:419.25px;top:511.36px;font-size:18px;font-weight:400;color:#0b2545;transform:scaleX(0.9532);">Reports</span>
<span class="t" style="left:488.80px;top:511.36px;font-size:18px;font-weight:400;color:#6c757d;transform:scaleX(1.4000);">/</span>
<span class="t" style="left:505.03px;top:511.36px;font-size:18px;font-weight:400;color:#6c757d;transform:scaleX(0.9676);">Book Reports</span>
<span class="t" style="left:424.20px;top:565.39px;font-size:17.5px;font-weight:400;color:#0b3470;-webkit-text-stroke:0.45px currentColor;">Accession Register</span>
<span class="t" style="left:424.20px;top:597.20px;font-size:16.3px;font-weight:400;color:#6c757d;transform:scaleX(0.9579);">View/print the Books List - Accession Register format.</span>
<span class="t" style="left:1043.60px;top:582.87px;font-size:13.5px;font-weight:700;color:#ffffff;transform:scaleX(1.0857);-webkit-text-stroke:0.3px currentColor;">0</span>
<span class="t" style="left:423.18px;top:639.59px;font-size:17.5px;font-weight:400;color:#0b3470;transform:scaleX(1.0164);-webkit-text-stroke:0.45px currentColor;">Browse Books</span>
<span class="t" style="left:423.24px;top:671.40px;font-size:16.3px;font-weight:400;color:#6c757d;transform:scaleX(0.9564);">Browse and edit all books.</span>
<span class="t" style="left:1043.60px;top:657.07px;font-size:13.5px;font-weight:700;color:#ffffff;transform:scaleX(1.0857);-webkit-text-stroke:0.3px currentColor;">0</span>
<span class="t" style="left:423.15px;top:713.79px;font-size:17.5px;font-weight:400;color:#0b3470;transform:scaleX(1.0531);-webkit-text-stroke:0.45px currentColor;">New Arrivals</span>
<span class="t" style="left:423.22px;top:745.60px;font-size:16.3px;font-weight:400;color:#6c757d;transform:scaleX(0.9754);">Newly added books to the stock.</span>
<span class="t" style="left:1043.60px;top:731.27px;font-size:13.5px;font-weight:700;color:#ffffff;transform:scaleX(1.0857);-webkit-text-stroke:0.3px currentColor;">0</span>
<span class="t" style="left:424.20px;top:787.99px;font-size:17.5px;font-weight:400;color:#0b3470;transform:scaleX(1.0462);-webkit-text-stroke:0.45px currentColor;">Textbooks</span>
<span class="t" style="left:423.23px;top:819.80px;font-size:16.3px;font-weight:400;color:#6c757d;transform:scaleX(0.9724);">List of textbooks</span>
<span class="t" style="left:1043.60px;top:805.47px;font-size:13.5px;font-weight:700;color:#ffffff;transform:scaleX(1.0857);-webkit-text-stroke:0.3px currentColor;">0</span>
<span class="t" style="left:423.20px;top:862.19px;font-size:17.5px;font-weight:400;color:#0b3470;transform:scaleX(1.0038);-webkit-text-stroke:0.45px currentColor;">Reference Books</span>
<span class="t" style="left:423.24px;top:894.00px;font-size:16.3px;font-weight:400;color:#6c757d;transform:scaleX(0.9558);">List of reference books</span>
<span class="t" style="left:1043.60px;top:879.67px;font-size:13.5px;font-weight:700;color:#ffffff;transform:scaleX(1.0857);-webkit-text-stroke:0.3px currentColor;">0</span>
<span class="t" style="left:1160.49px;top:564.56px;font-size:18px;font-weight:400;color:#0b3470;transform:scaleX(1.0109);-webkit-text-stroke:0.2px currentColor;">Books by Subject</span>
<span class="t" style="left:1170.69px;top:603.65px;font-size:15.3px;font-weight:700;color:#50565c;transform:scaleX(1.0099);">Enter subject (3+ chars)</span>
<span class="t" style="left:1742.36px;top:602.99px;font-size:16.2px;font-weight:400;color:#ffffff;transform:scaleX(0.9367);">Search</span>
<span class="t" style="left:1160.49px;top:668.06px;font-size:18px;font-weight:400;color:#0b3470;transform:scaleX(1.0096);-webkit-text-stroke:0.2px currentColor;">Books by Language</span>
<span class="t" style="left:1170.70px;top:707.15px;font-size:15.3px;font-weight:700;color:#0a0a0a;">Select Language</span>
<span class="t" style="left:1160.49px;top:771.56px;font-size:18px;font-weight:400;color:#0b3470;transform:scaleX(1.0124);-webkit-text-stroke:0.2px currentColor;">Books by DDC Number</span>
<span class="t" style="left:1170.71px;top:810.65px;font-size:15.3px;font-weight:700;color:#50565c;transform:scaleX(0.9885);">Enter class (2+ chars)</span>
<span class="t" style="left:1742.36px;top:809.99px;font-size:16.2px;font-weight:400;color:#ffffff;transform:scaleX(0.9367);">Search</span>
<span class="t" style="left:1160.45px;top:875.06px;font-size:18px;font-weight:400;color:#0b3470;transform:scaleX(1.0477);-webkit-text-stroke:0.2px currentColor;">Books by Author</span>
<span class="t" style="left:1170.67px;top:914.15px;font-size:15.3px;font-weight:700;color:#50565c;transform:scaleX(1.0259);">Enter author (2+ chars)</span>
<span class="t" style="left:1742.36px;top:913.49px;font-size:16.2px;font-weight:400;color:#ffffff;transform:scaleX(0.9367);">Search</span>
<span class="t" style="left:6.02px;top:999.88px;font-size:15.5px;font-weight:400;color:#303030;transform:scaleX(0.9835);">localhost/slims/reports/accregister.php</span>
<span class="t" style="left:117.57px;top:1043.19px;font-size:17.5px;font-weight:400;color:#5b5b5b;transform:scaleX(0.9315);">Search</span>
<span class="t" style="left:1674.07px;top:1043.23px;font-size:14.5px;font-weight:400;color:#1a1a1a;transform:scaleX(0.9333);">ENG</span>
<span class="t" style="left:1811.49px;top:1032.73px;font-size:14.5px;font-weight:400;color:#1a1a1a;transform:scaleX(1.0096);">1:13 PM</span>
<span class="t" style="left:1796.43px;top:1052.43px;font-size:14.5px;font-weight:400;color:#1a1a1a;transform:scaleX(1.0714);">3/17/2026</span>
</body></html>
